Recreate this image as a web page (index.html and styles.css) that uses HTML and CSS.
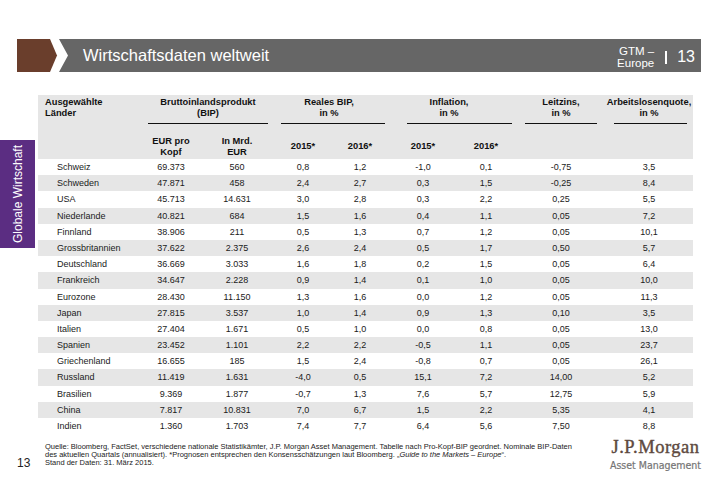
FILE: index.html
```html
<!DOCTYPE html>
<html lang="de">
<head>
<meta charset="utf-8">
<title>Wirtschaftsdaten weltweit</title>
<link rel="stylesheet" href="styles.css">
</head>
<body>
<header class="titlebar">
  <svg class="chevron" width="52" height="33" viewBox="0 0 52 33">
    <polygon points="0,0 33,0 40,16.5 33,33 0,33" fill="#6a3e2c"/>
    <polygon points="42,0 52,0 52,33 42,33 51,16.5" fill="#666666"/>
  </svg>
  <div class="bar">
    <h1 class="title">Wirtschaftsdaten weltweit</h1>
    <div class="meta">
      <div class="gtm">GTM –<br>Europe</div>
      <span class="sep"></span>
      <span class="pagenum">13</span>
    </div>
  </div>
</header>

<main class="content">
  <aside class="sidebar"><span class="sidebar-label">Globale Wirtschaft</span></aside>
  <div class="table">
    <div class="thead">
      <div class="hrow1">
        <div class="hcell hcountry">Ausgewählte<br>Länder</div>
        <div class="hgroup g-bip"><div class="glabel">Bruttoinlandsprodukt<br>(BIP)</div><div class="gline"></div></div>
        <div class="hgroup g-real"><div class="glabel">Reales BIP,<br>in %</div><div class="gline"></div></div>
        <div class="hgroup g-infl"><div class="glabel">Inflation,<br>in %</div><div class="gline"></div></div>
        <div class="hgroup g-leit"><div class="glabel">Leitzins,<br>in %</div><div class="gline"></div></div>
        <div class="hgroup g-arb"><div class="glabel">Arbeitslosenquote,<br>in %</div><div class="gline"></div></div>
      </div>
      <div class="hrow2">
        <div class="sub"></div>
        <div class="sub">EUR pro<br>Kopf</div>
        <div class="sub">In Mrd.<br>EUR</div>
        <div class="sub">2015*</div>
        <div class="sub">2016*</div>
        <div class="sub">2015*</div>
        <div class="sub">2016*</div>
        <div class="sub"></div>
        <div class="sub"></div>
      </div>
    </div>
    <div class="row"><span class="country">Schweiz</span><span>69.373</span><span>560</span><span>0,8</span><span>1,2</span><span>-1,0</span><span>0,1</span><span>-0,75</span><span>3,5</span></div>
    <div class="row"><span class="country">Schweden</span><span>47.871</span><span>458</span><span>2,4</span><span>2,7</span><span>0,3</span><span>1,5</span><span>-0,25</span><span>8,4</span></div>
    <div class="row"><span class="country">USA</span><span>45.713</span><span>14.631</span><span>3,0</span><span>2,8</span><span>0,3</span><span>2,2</span><span>0,25</span><span>5,5</span></div>
    <div class="row"><span class="country">Niederlande</span><span>40.821</span><span>684</span><span>1,5</span><span>1,6</span><span>0,4</span><span>1,1</span><span>0,05</span><span>7,2</span></div>
    <div class="row"><span class="country">Finnland</span><span>38.906</span><span>211</span><span>0,5</span><span>1,3</span><span>0,7</span><span>1,2</span><span>0,05</span><span>10,1</span></div>
    <div class="row"><span class="country">Grossbritannien</span><span>37.622</span><span>2.375</span><span>2,6</span><span>2,4</span><span>0,5</span><span>1,7</span><span>0,50</span><span>5,7</span></div>
    <div class="row"><span class="country">Deutschland</span><span>36.669</span><span>3.033</span><span>1,6</span><span>1,8</span><span>0,2</span><span>1,5</span><span>0,05</span><span>6,4</span></div>
    <div class="row"><span class="country">Frankreich</span><span>34.647</span><span>2.228</span><span>0,9</span><span>1,4</span><span>0,1</span><span>1,0</span><span>0,05</span><span>10,0</span></div>
    <div class="row"><span class="country">Eurozone</span><span>28.430</span><span>11.150</span><span>1,3</span><span>1,6</span><span>0,0</span><span>1,2</span><span>0,05</span><span>11,3</span></div>
    <div class="row"><span class="country">Japan</span><span>27.815</span><span>3.537</span><span>1,0</span><span>1,4</span><span>0,9</span><span>1,3</span><span>0,10</span><span>3,5</span></div>
    <div class="row"><span class="country">Italien</span><span>27.404</span><span>1.671</span><span>0,5</span><span>1,0</span><span>0,0</span><span>0,8</span><span>0,05</span><span>13,0</span></div>
    <div class="row"><span class="country">Spanien</span><span>23.452</span><span>1.101</span><span>2,2</span><span>2,2</span><span>-0,5</span><span>1,1</span><span>0,05</span><span>23,7</span></div>
    <div class="row"><span class="country">Griechenland</span><span>16.655</span><span>185</span><span>1,5</span><span>2,4</span><span>-0,8</span><span>0,7</span><span>0,05</span><span>26,1</span></div>
    <div class="row"><span class="country">Russland</span><span>11.419</span><span>1.631</span><span>-4,0</span><span>0,5</span><span>15,1</span><span>7,2</span><span>14,00</span><span>5,2</span></div>
    <div class="row"><span class="country">Brasilien</span><span>9.369</span><span>1.877</span><span>-0,7</span><span>1,3</span><span>7,6</span><span>5,7</span><span>12,75</span><span>5,9</span></div>
    <div class="row"><span class="country">China</span><span>7.817</span><span>10.831</span><span>7,0</span><span>6,7</span><span>1,5</span><span>2,2</span><span>5,35</span><span>4,1</span></div>
    <div class="row"><span class="country">Indien</span><span>1.360</span><span>1.703</span><span>7,4</span><span>7,7</span><span>6,4</span><span>5,6</span><span>7,50</span><span>8,8</span></div>
  </div>
</main>

<footer class="footer">
  <span class="pgno">13</span>
  <p class="note">Quelle: Bloomberg, FactSet, verschiedene nationale Statistikämter, J.P. Morgan Asset Management. Tabelle nach Pro-Kopf-BIP geordnet. Nominale BIP-Daten<br>des aktuellen Quartals (annualisiert). *Prognosen entsprechen den Konsensschätzungen laut Bloomberg. „<em>Guide to the Markets – Europe</em>“.<br>Stand der Daten: 31. März 2015.</p>
  <div class="logo">
    <div class="logo-main">J.P.Morgan</div>
    <div class="logo-sub">Asset Management</div>
  </div>
</footer>
</body>
</html>
```

FILE: styles.css
```css
* { box-sizing: border-box; }
html, body { margin: 0; padding: 0; }
body {
  width: 720px;
  height: 498px;
  background: #ffffff;
  font-family: "Liberation Sans", Arial, sans-serif;
  color: #1a1a1a;
  overflow: hidden;
}

/* ---------- title bar ---------- */
.titlebar {
  display: flex;
  margin: 39px 19px 0 17px;
  height: 33px;
}
.chevron { display: block; flex: none; }
.bar {
  flex: 1;
  background: #666666;
  display: flex;
  align-items: center;
  justify-content: space-between;
  padding: 0 6px 0 14px;
  color: #ffffff;
}
.title {
  margin: 0;
  font-size: 16.5px;
  font-weight: normal;
}
.meta {
  display: flex;
  align-items: center;
  padding-top: 3px;
}
.gtm {
  font-size: 11.5px;
  line-height: 12px;
  text-align: right;
}
.sep {
  width: 2px;
  height: 13px;
  background: #ffffff;
  margin: 0 10px 0 11px;
}
.pagenum {
  font-size: 16px;
  line-height: 18px;
}

/* ---------- content ---------- */
.content {
  display: flex;
  gap: 3px;
  margin-top: 23px;
}
.sidebar {
  flex: none;
  width: 35px;
  height: 108px;
  margin-top: 45px;
  background: #5b2d82;
  display: flex;
  align-items: center;
  justify-content: center;
}
.sidebar-label {
  writing-mode: vertical-rl;
  transform: rotate(180deg);
  color: #ffffff;
  font-size: 12px;
  white-space: nowrap;
}

.table {
  width: 655px;
  font-size: 9px;
}
.thead {
  background: #e6e6e6;
  font-weight: bold;
  font-size: 9.33px;
  line-height: 11px;
  color: #111;
}
.hrow1, .hrow2, .row {
  display: grid;
  grid-template-columns: 102px 62px 70px 62px 52px 74px 52px 98px 78px;
  padding-right: 5px;
}
.hrow1 {
  height: 29px;
  padding-top: 1.5px;
}
.hcountry {
  padding-left: 7px;
}
.hgroup {
  display: flex;
  flex-direction: column;
  align-items: center;
}
.glabel {
  text-align: center;
  white-space: nowrap;
  height: 22px;
}
.gline {
  align-self: stretch;
  height: 1px;
  background: #111;
  margin-top: 4.5px;
}
.g-bip { grid-column: 2 / 4; }
.g-bip .gline { margin-left: 8px; margin-right: 4px; }
.g-real { grid-column: 4 / 6; }
.g-real .gline { margin-left: 9px; margin-right: 1px; }
.g-infl { grid-column: 6 / 8; }
.g-infl .gline { margin-left: 21px; margin-right: 0; }
.g-leit { grid-column: 8 / 9; }
.g-leit .gline { margin-left: 13px; margin-right: 13px; }
.g-arb { grid-column: 9 / 10; }
.g-arb .gline { margin-left: 4px; margin-right: 1px; }
.g-bip .glabel { padding-left: 4px; }

.hrow2 {
  height: 35px;
  padding-top: 10px;
}
.sub {
  display: flex;
  align-items: center;
  justify-content: center;
  text-align: center;
}

.row {
  height: 16.2px;
  line-height: 16.2px;
  color: #1a1a1a;
}
.row:nth-child(odd) { background: #e6e6e6; }
.row span { text-align: center; white-space: nowrap; }
.row .country { text-align: left; padding-left: 19px; }

/* ---------- footer ---------- */
.footer {
  display: flex;
  align-items: flex-start;
  margin-top: 3px;
  padding-left: 17px;
  padding-right: 17px;
}
.pgno {
  flex: none;
  width: 28px;
  margin-top: 19px;
  font-size: 12px;
  line-height: 14px;
  color: #222;
}
.note {
  margin: 6px 0 0 0;
  font-size: 7.5px;
  line-height: 8px;
  color: #222;
  white-space: nowrap;
}
.logo {
  margin-left: auto;
  display: flex;
  flex-direction: column;
  align-items: center;
  width: 95px;
  padding-top: 1px;
}
.logo-main {
  font-family: "Liberation Serif", "Times New Roman", serif;
  font-size: 18.5px;
  line-height: 18px;
  letter-spacing: 0.5px;
  color: #5e4a3f;
  -webkit-text-stroke: 0.4px #5e4a3f;
  white-space: nowrap;
}
.logo-sub {
  margin-top: 3px;
  font-family: "DejaVu Sans Condensed", "DejaVu Sans", sans-serif;
  font-stretch: condensed;
  font-size: 10.5px;
  line-height: 12px;
  color: #757575;
  -webkit-text-stroke: 0.2px #757575;
  white-space: nowrap;
}
```
